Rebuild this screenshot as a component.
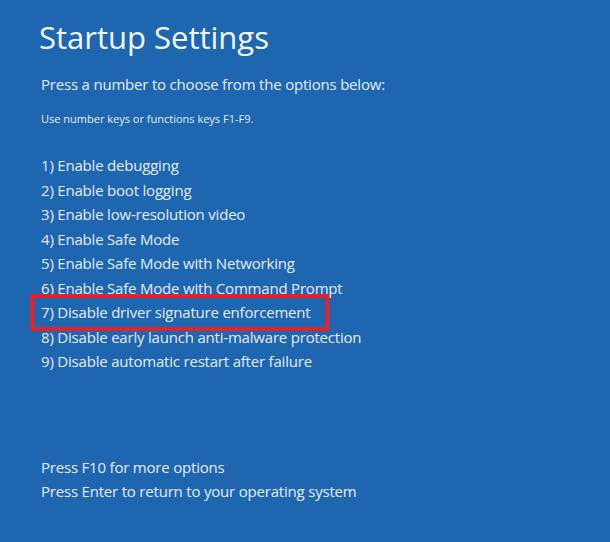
const options = [
  "1) Enable debugging",
  "2) Enable boot logging",
  "3) Enable low-resolution video",
  "4) Enable Safe Mode",
  "5) Enable Safe Mode with Networking",
  "6) Enable Safe Mode with Command Prompt",
  "7) Disable driver signature enforcement",
  "8) Disable early launch anti-malware protection",
  "9) Disable automatic restart after failure",
]

export default function App() {
  return (
    <div
      className="w-[610px] h-[542px] overflow-hidden bg-[#1f66b0] text-[#e4ecf6] pl-[41px] pt-[15px]"
      style={{ fontFamily: '"Open Sans", "Noto Sans", sans-serif' }}
    >
      <h1 className="ml-[-2px] text-[31px] leading-[44px] font-normal text-[#f2f6fb]">Startup Settings</h1>
      <p className="mt-[13px] text-[15px] leading-[24px] tracking-[-0.2px]">
        Press a number to choose from the options below:
      </p>
      <p className="mt-[15px] text-[11px] leading-[16px]">Use number keys or functions keys F1-F9.</p>

      <ul className="mt-[26px] text-[15px] tracking-[-0.2px]">
        {options.map((opt, i) => (
          <li key={opt} className="relative leading-[24.5px] whitespace-nowrap">
            {opt}
            {i === 6 && (
              <span className="absolute left-[-11px] top-[-6px] w-[299px] h-[37px] border-[4px] border-[#e8202a]" />
            )}
          </li>
        ))}
      </ul>

      <div className="mt-[81px] text-[15px] tracking-[-0.2px]">
        <p className="leading-[24.5px]">Press F10 for more options</p>
        <p className="leading-[24.5px]">Press Enter to return to your operating system</p>
      </div>
    </div>
  )
}
